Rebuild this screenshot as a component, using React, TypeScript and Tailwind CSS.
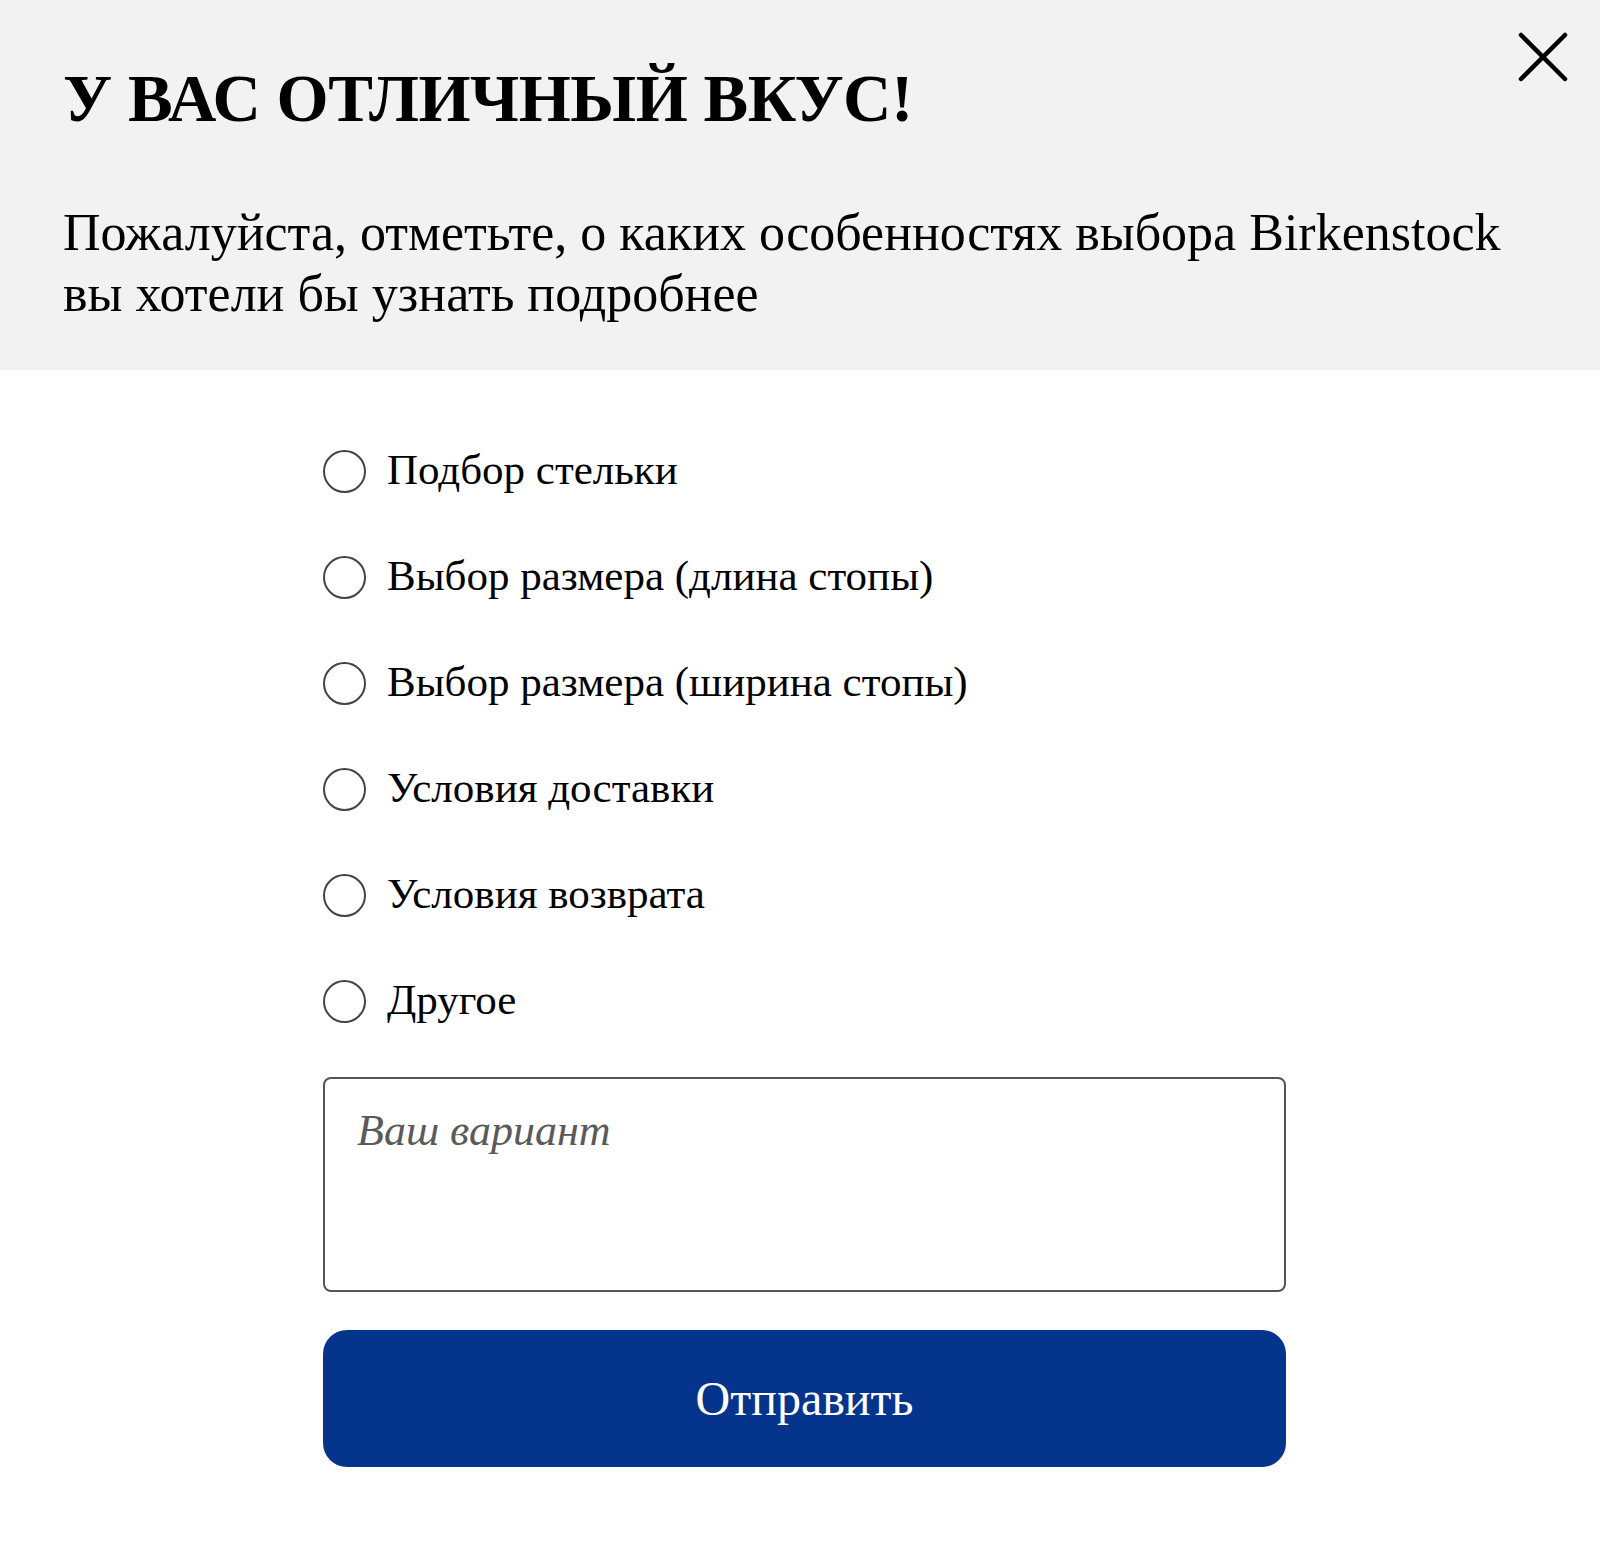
import { useState } from 'react';

const options = [
  'Подбор стельки',
  'Выбор размера (длина стопы)',
  'Выбор размера (ширина стопы)',
  'Условия доставки',
  'Условия возврата',
  'Другое',
];

export default function App() {
  const [selected, setSelected] = useState<number | null>(null);

  return (
    <div className="min-h-[1543px] w-[1600px] bg-white font-['Liberation_Serif','Times_New_Roman',serif] text-black">
      {/* Header */}
      <div className="relative h-[370px] bg-[#f2f2f2] pl-[63px] pt-[63px]">
        <h1 className="text-[67px] font-bold leading-[70px] tracking-[-0.5px]">У ВАС ОТЛИЧНЫЙ ВКУС!</h1>
        <p className="mt-[69px] w-[1460px] text-[52px] leading-[61px]">
          Пожалуйста, отметьте, о каких особенностях выбора Birkenstock вы хотели бы узнать подробнее
        </p>
        <button className="absolute right-[32px] top-[32px] h-[50px] w-[50px]" title="Закрыть">
          <svg viewBox="0 0 50 50" className="h-full w-full">
            <path d="M3 3 L47 47 M47 3 L3 47" stroke="#000" strokeWidth="4.5" strokeLinecap="round" />
          </svg>
        </button>
      </div>

      {/* Form */}
      <div className="ml-[323px] w-[963px] pt-[48px]">
        <div className="flex flex-col">
          {options.map((label, index) => (
            <label key={index} className="flex h-[106px] cursor-pointer items-center gap-[21px]">
              <span
                onClick={() => setSelected(index)}
                className="flex h-[43px] w-[43px] shrink-0 items-center justify-center rounded-full border-2 border-[#444]"
              >
                {selected === index && <span className="h-[23px] w-[23px] rounded-full bg-[#04348c]" />}
              </span>
              <span className="-mt-[3px] text-[43px] leading-[48px]">{label}</span>
            </label>
          ))}
        </div>

        <textarea
          placeholder="Ваш вариант"
          className="mt-[23px] block h-[215px] w-full resize-none rounded-[8px] border-2 border-[#555] bg-white px-[32px] pt-[26px] text-[44px] leading-[1.2] outline-none placeholder:italic placeholder:text-[#5a5a5a]"
        />

        <button className="mt-[38px] flex h-[137px] w-full items-center justify-center rounded-[24px] bg-[#04348c] text-[48px] leading-[48px] text-white">
          Отправить
        </button>
      </div>
    </div>
  );
}
